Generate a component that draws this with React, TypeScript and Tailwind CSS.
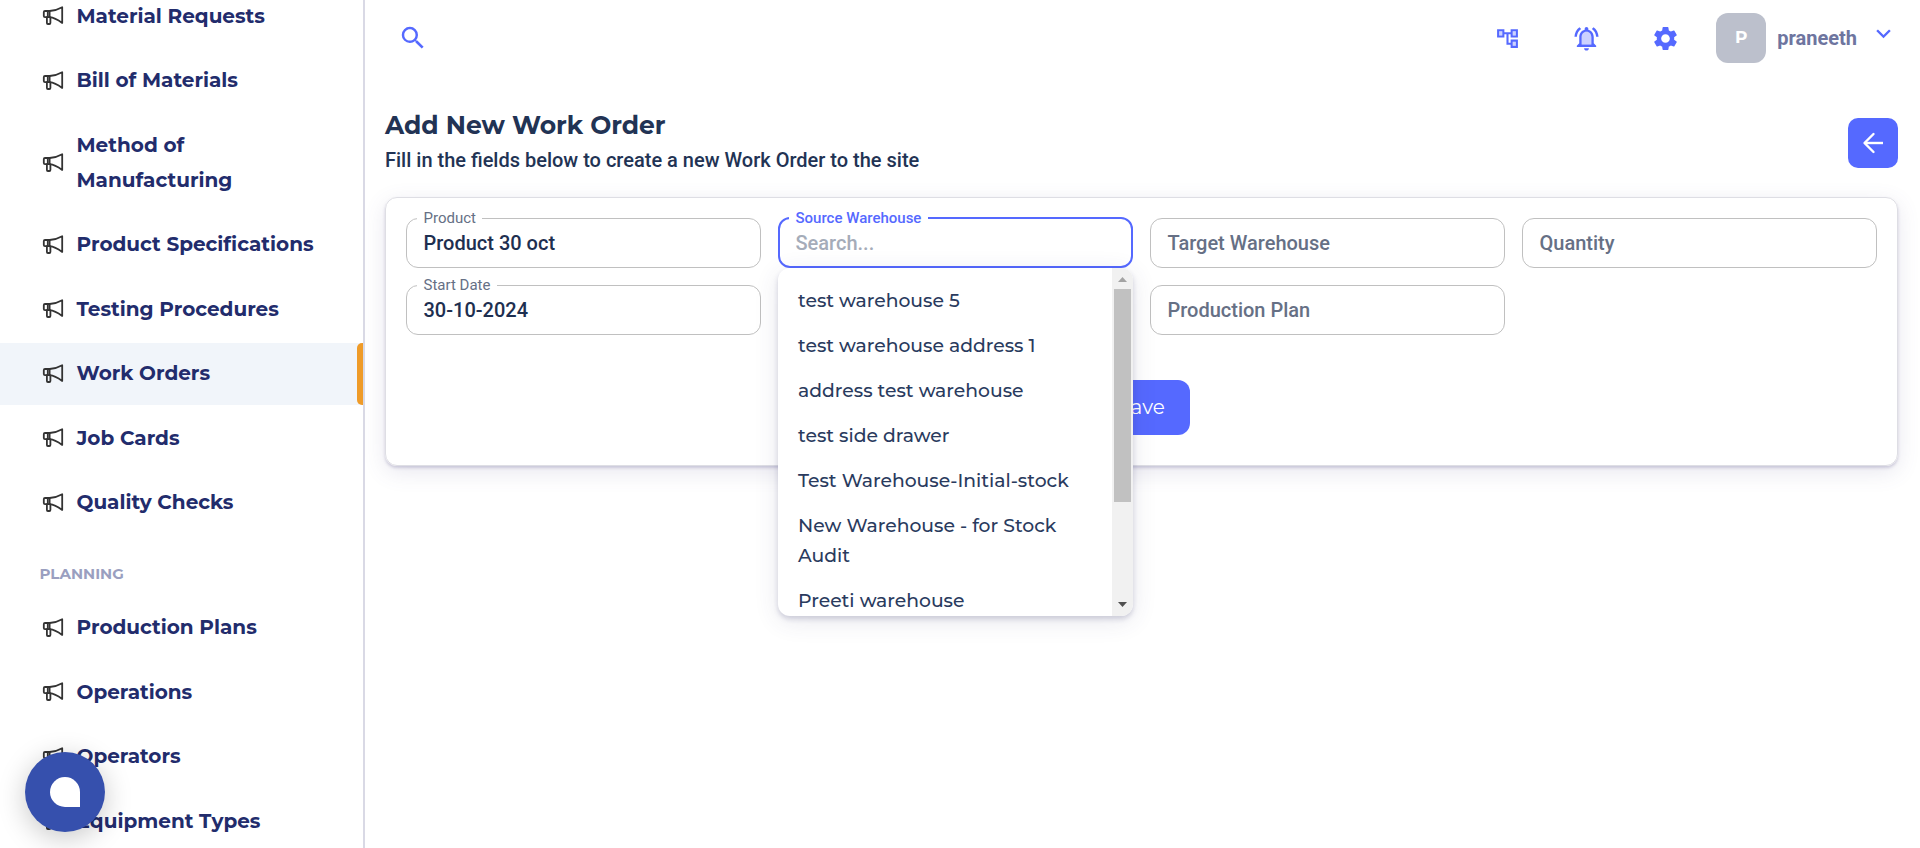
import { MdSearch, MdSettings, MdKeyboardArrowDown } from "react-icons/md";

const display = "font-[Montserrat,Inter,sans-serif]";

function TreeIcon({ className }: { className: string }) {
  return (
    <svg viewBox="0 0 24 24" fill="currentColor" className={className}>
      <path opacity=".3" d="M7 9H4V5h3v4zm10 6h3v4h-3v-4zm0-10h3v4h-3V5z" />
      <path d="M22 11V3h-7v3H9V3H2v8h7V8h2v10h4v3h7v-8h-7v3h-2V8h2v3h7zM7 9H4V5h3v4zm10 6h3v4h-3v-4zm0-10h3v4h-3V5z" />
    </svg>
  );
}

function BellIcon({ className }: { className: string }) {
  return (
    <svg viewBox="0 0 24 24" fill="currentColor" className={className}>
      <path opacity=".3" d="M12 6.5c-2.490 0-4 2.020-4 4.500v6h8v-6c0-2.480-1.510-4.500-4-4.500z" />
      <path d="M12 22c1.100 0 2-.9 2-2h-4c0 1.100.9 2 2 2zm6-6v-5c0-3.070-1.630-5.640-4.500-6.320V4c0-.83-.67-1.500-1.500-1.500s-1.500.67-1.500 1.500v.68C7.640 5.360 6 7.920 6 11v5l-2 2v1h16v-1l-2-2zm-2 1H8v-6c0-2.480 1.510-4.500 4-4.500s4 2.020 4 4.500v6zM7.580 4.080 6.150 2.650C3.750 4.480 2.170 7.300 2.030 10.500h2c.15-2.650 1.510-4.970 3.550-6.420zm12.390 6.420h2c-.15-3.200-1.730-6.020-4.120-7.850l-1.420 1.430c2.020 1.450 3.390 3.770 3.540 6.420z" />
    </svg>
  );
}

function Megaphone() {
  return (
    <svg width="22" height="20" viewBox="0 0 22 20" fill="none" stroke="#333" strokeWidth="1.800" strokeLinejoin="round" strokeLinecap="round" className="shrink-0">
      <path d="M3 5h4.600v6.200H3a1.200 1.200 0 0 1-1.200-1.200V6.200A1.200 1.200 0 0 1 3 5z" />
      <path d="M5.800 5v6.200" />
      <path d="M7.600 5c5-.2 8.600-1.400 12.600-3.700v15.600c-3.600-2.500-7.600-5.100-12.600-5.700" />
      <path d="M4.900 11.200v5.800a1 1 0 0 0 1 1h1.500a1 1 0 0 0 1-1v-5.600" />
    </svg>
  );
}

type Item = { lines: string[]; active?: boolean };

const manufacturing: Item[] = [
  { lines: ["Material Requests"] },
  { lines: ["Bill of Materials"] },
  { lines: ["Method of", "Manufacturing"] },
  { lines: ["Product Specifications"] },
  { lines: ["Testing Procedures"] },
  { lines: ["Work Orders"], active: true },
  { lines: ["Job Cards"] },
  { lines: ["Quality Checks"] },
];
const planning: Item[] = [
  { lines: ["Production Plans"] },
  { lines: ["Operations"] },
  { lines: ["Operators"] },
  { lines: ["Equipment Types"] },
];

function NavItem({ item }: { item: Item }) {
  return (
    <li className={`mb-[2.500px] flex min-h-[62px] items-center justify-between ${item.active ? "bg-[#f1f5fa]" : ""}`}>
      <div className="flex items-center gap-[12.500px] py-[13.500px] pl-[42px]">
        <Megaphone />
        <span className="text-[20px] leading-[35px] font-bold whitespace-nowrap text-[#222c6c]">
          {item.lines.map((l) => (
            <span key={l} className="block">{l}</span>
          ))}
        </span>
      </div>
      {item.active && <span className="w-1.5 self-stretch rounded-l-[5px] bg-[#ef9b28]" />}
    </li>
  );
}

function Field({ label, value }: { label: string; value?: string }) {
  return value ? (
    <fieldset className="-mt-[7px] h-[57px] min-w-0 rounded-xl border border-[#c0c0c0] pl-[10px]">
      <legend className="px-[6.500px] text-[15px] leading-[14px] text-[#667085]">{label}</legend>
      <div className="pl-[6.500px] text-[20px] leading-[36px] font-medium text-[#1e2f50]">{value}</div>
    </fieldset>
  ) : (
    <div className="flex h-[50px] items-center rounded-xl border border-[#c0c0c0] px-[16.500px] text-[20px] font-medium text-[#667085]">{label}</div>
  );
}

const options: string[][] = [
  ["test warehouse 5"],
  ["test warehouse address 1"],
  ["address test warehouse"],
  ["test side drawer"],
  ["Test Warehouse-Initial-stock"],
  ["New Warehouse - for Stock", "Audit"],
  ["Preeti warehouse"],
];

function Dropdown() {
  return (
    <div className="absolute top-[57px] left-0 z-10 flex h-[348px] w-[355px] overflow-hidden rounded-xl bg-white shadow-[0_3px_5px_rgba(60,60,110,0.2),0_5px_24px_rgba(60,60,110,0.12)]">
      <ul className={`flex-1 pt-[10px] pl-5 text-[18.750px] leading-[30px] font-medium text-[#2a3b5e] ${display}`}>
        {options.map((o) => (
          <li key={o[0]} className="py-[7.500px] whitespace-nowrap">
            {o.map((l) => (
              <span key={l} className="block">{l}</span>
            ))}
          </li>
        ))}
      </ul>
      <div className="flex w-[21px] flex-col items-center justify-between bg-[#f1f1f1]">
        <div className="flex flex-col items-center">
          <svg width="17" height="21" viewBox="0 0 17 21"><path d="M4 14h9L8.500 9z" fill="#a3a3a3" /></svg>
          <span className="h-[213px] w-[17px] bg-[#c1c1c1]" />
        </div>
        <svg width="17" height="21" viewBox="0 0 17 21"><path d="M4 7h9l-4.500 5z" fill="#505050" /></svg>
      </div>
    </div>
  );
}

export default function App() {
  return (
    <div className="relative flex h-[848px] w-[1920px] overflow-hidden bg-white font-[Roboto,sans-serif]">
      <aside className={`w-[365px] shrink-0 overflow-hidden border-r-2 border-[#d9d9e5] ${display}`}>
        <ul className="-mt-[15px]">
          {manufacturing.map((i) => <NavItem key={i.lines[0]} item={i} />)}
        </ul>
        <h3 className="flex h-[60.500px] items-center pt-[15px] pl-[39.500px] text-[15px] font-bold text-[#9a9fc0]">PLANNING</h3>
        <ul>
          {planning.map((i) => <NavItem key={i.lines[0]} item={i} />)}
        </ul>
      </aside>

      <main className="flex flex-1 flex-col pr-[22px] pl-[20px]">
        <header className="flex h-[76px] items-center text-[#5569ff]">
          <MdSearch className="ml-[13px] size-[30px]" />
          <div className="ml-auto flex items-center">
            <TreeIcon className="size-[25px]" />
            <BellIcon className="ml-[52px] size-[29px]" />
            <MdSettings className="ml-[50px] size-[29px]" />
            <span className={`ml-[36px] flex size-[50px] items-center justify-center rounded-xl bg-[#bcc0cc] text-[17px] font-bold text-white ${display}`}>P</span>
            <span className="ml-[11px] text-[20px] font-bold text-[#6e759f]">praneeth</span>
            <MdKeyboardArrowDown className="mb-[10px] ml-[12px] size-[29px]" />
          </div>
        </header>

        <div className="mt-[32px] flex items-start justify-between">
          <div>
            <h1 className={`text-[25px] leading-[34px] font-bold text-[#223354] ${display}`}>Add New Work Order</h1>
            <p className="text-[20px] leading-[37px] font-medium text-[#223354]">Fill in the fields below to create a new Work Order to the site</p>
          </div>
          <button className="mt-[10px] flex size-[50px] items-center justify-center rounded-[10px] bg-[#5569ff]">
            <svg width="22" height="22" viewBox="0 0 22 22" fill="none" stroke="#fff" strokeWidth="2.400"><path d="M21 11H3" /><path d="M11.500 2 2.500 11l9 9" strokeLinecap="round" strokeLinejoin="round" /></svg>
          </button>
        </div>

        <section className="mt-[18px] h-[269px] rounded-xl border border-[#dedee4] px-5 pt-5 shadow-[0_2px_3px_rgba(90,85,140,0.25),0_6px_22px_rgba(90,85,140,0.14)]">
          <div className="grid grid-cols-[355px_355px_355px_355px] gap-[17px]">
            <Field label="Product" value="Product 30 oct" />
            <div className="relative -mt-[7px]">
              <fieldset className="h-[57px] rounded-xl border-2 border-[#5569ff] pl-[9px]">
                <legend className="px-[6.500px] text-[15px] leading-[14px] font-medium text-[#5569ff]">Source Warehouse</legend>
                <div className="pl-[6.500px] text-[20px] leading-[36px] font-medium text-[#a5acb9]">Search...</div>
              </fieldset>
              <Dropdown />
            </div>
            <Field label="Target Warehouse" />
            <Field label="Quantity" />
            <Field label="Start Date" value="30-10-2024" />
            <span />
            <Field label="Production Plan" />
          </div>
          <div className="mt-[45px] flex justify-center">
            <button className={`h-[55px] w-[97px] rounded-xl bg-[#5569ff] pb-0.5 text-[20px] text-white ${display}`}>Save</button>
          </div>
        </section>
      </main>

      <button className="absolute bottom-[16px] left-[25px] flex size-[80px] items-center justify-center rounded-full bg-[#3650ad] shadow-[0_6px_28px_rgba(0,0,0,0.22)]">
        <span className="size-[30px] rounded-[15px] rounded-br-none bg-white" />
      </button>
    </div>
  );
}
